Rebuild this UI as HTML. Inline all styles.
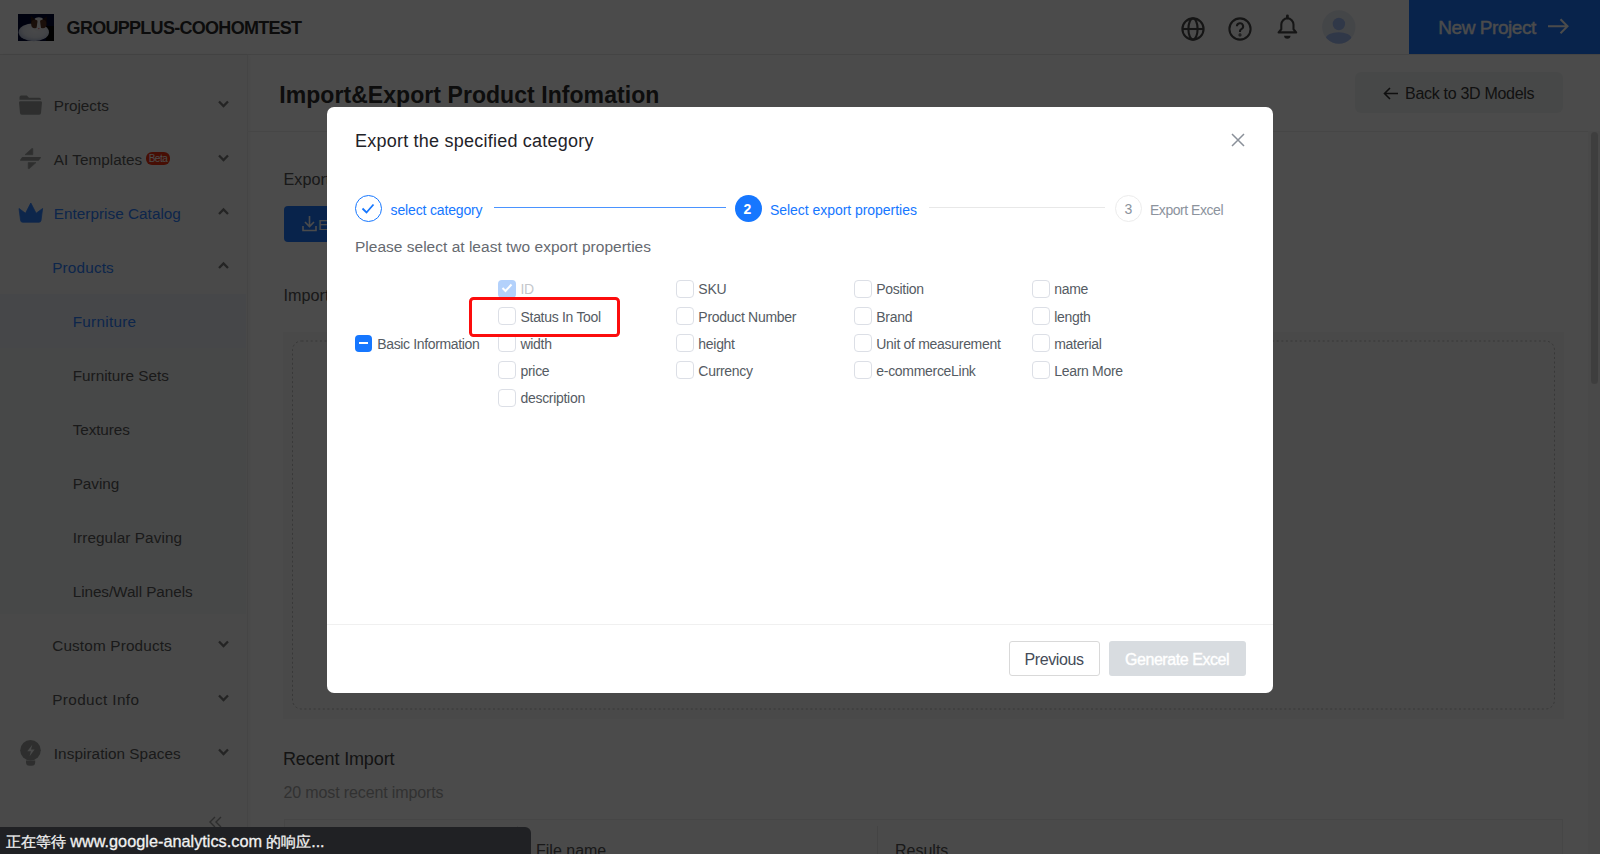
<!DOCTYPE html>
<html><head><meta charset="utf-8">
<style>
*{margin:0;padding:0;box-sizing:border-box}
html,body{width:1600px;height:854px;overflow:hidden;background:#fff;font-family:"Liberation Sans",sans-serif;color:#333}
.a{position:absolute;white-space:nowrap}
svg.a{overflow:visible}
.cb{position:absolute;width:18px;height:18px;border:1px solid #dcdfe6;border-radius:4px;background:#fff}
</style></head><body>
<div class="a" style="left:0;top:0;width:1600px;height:55px;background:#fff;border-bottom:1px solid #e6e6e6"></div>
<svg class="a" style="left:18px;top:14px" width="36" height="27" viewBox="0 0 36 27">
<defs><radialGradient id="cg" cx="0.55" cy="0.4" r="0.6"><stop offset="0" stop-color="#f6f7fa"/><stop offset="0.65" stop-color="#e4e8f1"/><stop offset="1" stop-color="#b5bfd8"/></radialGradient></defs>
<rect width="36" height="27" fill="#020735"/>
<rect x="28" y="12" width="8" height="15" fill="#000"/>
<ellipse cx="15.8" cy="18.2" rx="15.2" ry="9" fill="url(#cg)"/>
<circle cx="20.8" cy="10.5" r="7.2" fill="#eceef2"/>
<path d="M12.8 1.8L13 10.5L18 6.2z M28.8 2.2L28.6 11L23.6 6.2z" fill="#2a1510"/>
<ellipse cx="16.8" cy="10" rx="3.6" ry="4.3" fill="#5a3322"/>
<ellipse cx="24.8" cy="10" rx="3.6" ry="4.3" fill="#5a3322"/>
<path d="M19.6 6.8h2.4l1.2 8.5h-4.8z" fill="#f0f1f4"/>
<ellipse cx="20.8" cy="14.6" rx="0.9" ry="0.6" fill="#e46b78"/>
</svg>
<div class="a" style="left:66.60px;top:18.76px;font-size:18px;line-height:18px;color:#2a2a2a;font-weight:bold;letter-spacing:-0.711px;">GROUPPLUS-COOHOMTEST</div>
<svg class="a" style="left:1181px;top:17px" width="24" height="24" viewBox="0 0 24 24" fill="none" stroke="#4a4a4a" stroke-width="2.1"><circle cx="12" cy="12" r="10.6"/><ellipse cx="12" cy="12" rx="4.6" ry="10.6"/><line x1="1.4" y1="12" x2="22.6" y2="12"/></svg>
<svg class="a" style="left:1228px;top:17px" width="24" height="24" viewBox="0 0 24 24" fill="none" stroke="#4a4a4a" stroke-width="2.1"><circle cx="12" cy="12" r="10.6"/><path d="M8.9 9.3a3.1 3.1 0 1 1 4.5 2.8c-.9.5-1.4 1-1.4 2v1"/><circle cx="12" cy="17.9" r="0.5" fill="#4a4a4a"/></svg>
<svg class="a" style="left:1277px;top:14px" width="21" height="26" viewBox="0 0 21 26" fill="none" stroke="#4a4a4a" stroke-width="2.1"><path d="M10.4 1.8v2.2" stroke-linecap="round" stroke-width="2.8"/><path d="M1.6 18.4L4.3 15.2V10.6A6.1 6.3 0 0 1 16.5 10.6V15.2L19.2 18.4Z" stroke-linejoin="round"/><path d="M7.1 21.7h6.4a3.2 3 0 0 1 -6.4 0z" fill="#4a4a4a" stroke="none"/></svg>
<svg class="a" style="left:1322px;top:10px" width="34" height="34" viewBox="0 0 34 34"><defs><clipPath id="av"><circle cx="16.8" cy="17" r="16.7"/></clipPath></defs><circle cx="16.8" cy="17" r="16.7" fill="#e8edf5"/><g clip-path="url(#av)" fill="#a4bdf4"><circle cx="16.9" cy="14" r="6.2"/><ellipse cx="16.6" cy="28.5" rx="12.8" ry="6.2"/></g></svg>
<div class="a" style="left:1409px;top:0;width:191px;height:54px;background:#1c78fd"></div>
<div class="a" style="left:1438.30px;top:18.31px;font-size:19px;line-height:19px;color:#fff;font-weight:normal;letter-spacing:-0.442px;-webkit-text-stroke:0.4px #fff;">New Project</div>
<svg class="a" style="left:1547px;top:17px" width="22" height="18" viewBox="0 0 22 18" fill="none" stroke="#fff" stroke-width="2"><path d="M1 9.3h19.5M13.5 2.3l7 7-7 7"/></svg>
<div class="a" style="left:0;top:55px;width:248px;height:799px;background:#f6f8f7;border-right:1px solid #e9ebea;box-shadow:1px 0 4px rgba(0,0,0,0.06)"></div>
<div class="a" style="left:0;top:294px;width:246px;height:320px;background:#f1f3f3"></div>
<div class="a" style="left:0;top:294px;width:246px;height:54px;background:#edf2f9"></div>
<div class="a" style="left:53.80px;top:97.75px;font-size:15.3px;line-height:15.3px;color:#5a5a5a;font-weight:normal;letter-spacing:-0.039px;">Projects</div>
<svg class="a" style="left:218px;top:100.2px" width="11" height="8" viewBox="0 0 11 8" fill="none" stroke="#7a7a7a" stroke-width="2.3"><path d="M1 1.5l4.5 4.5 4.5-4.5"/></svg>
<div class="a" style="left:53.80px;top:151.75px;font-size:15.3px;line-height:15.3px;color:#5a5a5a;font-weight:normal;letter-spacing:0.021px;">AI Templates</div>
<svg class="a" style="left:218px;top:154.2px" width="11" height="8" viewBox="0 0 11 8" fill="none" stroke="#7a7a7a" stroke-width="2.3"><path d="M1 1.5l4.5 4.5 4.5-4.5"/></svg>
<div class="a" style="left:53.80px;top:205.75px;font-size:15.3px;line-height:15.3px;color:#2f80ff;font-weight:normal;letter-spacing:0.022px;">Enterprise Catalog</div>
<svg class="a" style="left:218px;top:208.2px" width="11" height="8" viewBox="0 0 11 8" fill="none" stroke="#7a7a7a" stroke-width="2.3"><path d="M1 6l4.5-4.5 4.5 4.5"/></svg>
<div class="a" style="left:52.20px;top:259.75px;font-size:15.3px;line-height:15.3px;color:#2f80ff;font-weight:normal;letter-spacing:0.174px;">Products</div>
<svg class="a" style="left:218px;top:262.2px" width="11" height="8" viewBox="0 0 11 8" fill="none" stroke="#7a7a7a" stroke-width="2.3"><path d="M1 6l4.5-4.5 4.5 4.5"/></svg>
<div class="a" style="left:72.70px;top:313.75px;font-size:15.3px;line-height:15.3px;color:#2f80ff;font-weight:normal;letter-spacing:0.272px;">Furniture</div>
<div class="a" style="left:72.70px;top:367.75px;font-size:15.3px;line-height:15.3px;color:#5a5a5a;font-weight:normal;letter-spacing:0.008px;">Furniture Sets</div>
<div class="a" style="left:72.70px;top:421.75px;font-size:15.3px;line-height:15.3px;color:#5a5a5a;font-weight:normal;letter-spacing:-0.103px;">Textures</div>
<div class="a" style="left:72.70px;top:475.75px;font-size:15.3px;line-height:15.3px;color:#5a5a5a;font-weight:normal;letter-spacing:-0.037px;">Paving</div>
<div class="a" style="left:72.70px;top:529.75px;font-size:15.3px;line-height:15.3px;color:#5a5a5a;font-weight:normal;letter-spacing:0.093px;">Irregular Paving</div>
<div class="a" style="left:72.70px;top:583.75px;font-size:15.3px;line-height:15.3px;color:#5a5a5a;font-weight:normal;letter-spacing:-0.065px;">Lines/Wall Panels</div>
<div class="a" style="left:52.20px;top:637.75px;font-size:15.3px;line-height:15.3px;color:#5a5a5a;font-weight:normal;letter-spacing:0.161px;">Custom Products</div>
<svg class="a" style="left:218px;top:640.2px" width="11" height="8" viewBox="0 0 11 8" fill="none" stroke="#7a7a7a" stroke-width="2.3"><path d="M1 1.5l4.5 4.5 4.5-4.5"/></svg>
<div class="a" style="left:52.20px;top:691.75px;font-size:15.3px;line-height:15.3px;color:#5a5a5a;font-weight:normal;letter-spacing:0.391px;">Product Info</div>
<svg class="a" style="left:218px;top:694.2px" width="11" height="8" viewBox="0 0 11 8" fill="none" stroke="#7a7a7a" stroke-width="2.3"><path d="M1 1.5l4.5 4.5 4.5-4.5"/></svg>
<div class="a" style="left:53.80px;top:745.75px;font-size:15.3px;line-height:15.3px;color:#5a5a5a;font-weight:normal;letter-spacing:0.060px;">Inspiration Spaces</div>
<svg class="a" style="left:218px;top:748.2px" width="11" height="8" viewBox="0 0 11 8" fill="none" stroke="#7a7a7a" stroke-width="2.3"><path d="M1 1.5l4.5 4.5 4.5-4.5"/></svg>
<div class="a" style="left:146px;top:152px;width:24px;height:12.5px;border-radius:6px;background:#f0320f;color:#fff;font-size:10px;line-height:13px;text-align:center;letter-spacing:-0.5px">Beta</div>
<svg class="a" style="left:19px;top:95px" width="23" height="20" viewBox="0 0 23 20"><path d="M0.5 2.2A1.7 1.7 0 0 1 2.2 .5h5.6l2.2 2.2h10.3a1.7 1.7 0 0 1 1.7 1.7v.4H.5z" fill="#9c9e9d"/><path d="M0 7.6A1.4 1.4 0 0 1 1.4 6.3H21.6A1.4 1.4 0 0 1 23 7.6l-1 10.5A1.8 1.8 0 0 1 20.2 19.8H2.8A1.8 1.8 0 0 1 1 18.1z" fill="#9c9e9d"/></svg>
<svg class="a" style="left:19px;top:148px" width="23" height="22" viewBox="0 0 23 22"><path d="M12.9 .4L13.8 .6V6.7H6z" fill="#9c9e9d" stroke="#9c9e9d" stroke-width=".6" stroke-linejoin="round"/><path d="M3.4 8.9H21.4Q22.4 8.9 21.8 9.9L20 12.2Q19.6 12.7 19 12.7H1.6Q.6 12.7 1.2 11.7L2.8 9.4Q3 8.9 3.4 8.9z" fill="#9c9e9d"/><path d="M9.2 14.6H17L10.1 20.8L9.2 20.5z" fill="#9c9e9d" stroke="#9c9e9d" stroke-width=".6" stroke-linejoin="round"/></svg>
<svg class="a" style="left:18.6px;top:202.8px" width="24" height="20" viewBox="0 0 24 20"><path d="M0 5.5L6.5 10.3L11.8 0L17.1 10.3L23.6 5.5L22 17.5Q21.8 19.2 20 19.2H3.6Q1.8 19.2 1.6 17.5z" fill="#2f80ff" stroke="#2f80ff" stroke-width=".8" stroke-linejoin="round"/></svg>
<svg class="a" style="left:20px;top:739.5px" width="22" height="27" viewBox="0 0 22 27"><circle cx="10.5" cy="10.3" r="10.3" fill="#9c9e9d"/><path d="M6 20.5h9.2v1.8a3.5 3.5 0 0 1 -3.5 3.5h-2.2a3.5 3.5 0 0 1 -3.5 -3.5z" fill="#9c9e9d"/><path d="M12.3 4.7L7.3 11.3h3.6L9.6 16.2L14.6 9.6H11z" fill="#f6f8f7"/></svg>
<svg class="a" style="left:207px;top:816px" width="16" height="12" viewBox="0 0 16 12" fill="none" stroke="#999" stroke-width="1.4"><path d="M8 1L3 6l5 5M14 1L9 6l5 5"/></svg>
<div class="a" style="left:279.30px;top:83.73px;font-size:23px;line-height:23px;color:#2e2e2e;font-weight:bold;letter-spacing:0.058px;">Import&amp;Export Product Infomation</div>
<div class="a" style="left:1355px;top:72px;width:208px;height:41px;border-radius:6px;background:#f2f4f3"></div>
<svg class="a" style="left:1383px;top:87px" width="16" height="13" viewBox="0 0 16 13" fill="none" stroke="#333" stroke-width="1.6"><path d="M15 6.5H1.5M7 1L1.5 6.5 7 12"/></svg>
<div class="a" style="left:1405.00px;top:85.75px;font-size:16px;line-height:16px;color:#3a3a3a;font-weight:normal;letter-spacing:-0.293px;">Back to 3D Models</div>
<div class="a" style="left:247px;top:131px;width:1341px;height:1px;background:#ececec"></div>
<div class="a" style="left:283.50px;top:171.48px;font-size:16.2px;line-height:16.2px;color:#555;font-weight:normal;">Export</div>
<div class="a" style="left:284px;top:206px;width:120px;height:36px;border-radius:4px;background:#1c78fd"></div>
<svg class="a" style="left:302px;top:215px" width="15" height="17" viewBox="0 0 15 17" fill="none" stroke="#fff" stroke-width="1.6"><path d="M7.5 1v10M3 7l4.5 4.5L12 7M1 11v4.5h13V11"/></svg>
<div class="a" style="left:318.00px;top:217.30px;font-size:15px;line-height:15px;color:#fff;font-weight:normal;">Export</div>
<div class="a" style="left:283.50px;top:287.48px;font-size:16.2px;line-height:16.2px;color:#555;font-weight:normal;">Import</div>
<div class="a" style="left:283px;top:332px;width:1281px;height:387px;background:#f6f6f6"></div>
<svg class="a" style="left:0;top:0" width="1600" height="854"><rect x="292.5" y="341" width="1262" height="368" rx="9" fill="none" stroke="#bdbdbd" stroke-width="1" stroke-dasharray="2 2.6"/></svg>
<div class="a" style="left:283.00px;top:750.16px;font-size:18px;line-height:18px;color:#444;font-weight:normal;letter-spacing:-0.129px;">Recent Import</div>
<div class="a" style="left:283.50px;top:784.65px;font-size:16px;line-height:16px;color:#a8a8a8;font-weight:normal;letter-spacing:-0.130px;">20 most recent imports</div>
<div class="a" style="left:284px;top:819px;width:1279px;height:40px;background:#fafafa;border:1px solid #eeeeee"></div>
<div class="a" style="left:517px;top:826px;width:1px;height:30px;background:#e6e6e6"></div>
<div class="a" style="left:877px;top:826px;width:1px;height:30px;background:#e6e6e6"></div>
<div class="a" style="left:536.00px;top:843.45px;font-size:16px;line-height:16px;color:#555;font-weight:normal;">File name</div>
<div class="a" style="left:895.00px;top:843.45px;font-size:16px;line-height:16px;color:#555;font-weight:normal;">Results</div>
<div class="a" style="left:1588px;top:131px;width:12px;height:723px;background:#f6f6f6"></div>
<div class="a" style="left:1591px;top:132px;width:7px;height:252px;border-radius:4px;background:#d4d4d4"></div>
<div class="a" style="left:0;top:0;width:1600px;height:854px;background:rgba(0,0,0,0.705)"></div>
<div class="a" style="left:327px;top:107px;width:946px;height:586px;background:#fff;border-radius:7px"></div>
<div class="a" style="left:355.00px;top:132.16px;font-size:18px;line-height:18px;color:#1f2329;font-weight:normal;letter-spacing:0.227px;">Export the specified category</div>
<svg class="a" style="left:1231px;top:133px" width="14" height="14" viewBox="0 0 14 14" fill="none" stroke="#8a9099" stroke-width="1.5"><path d="M1 1l12 12M13 1L1 13"/></svg>
<div class="a" style="left:354.5px;top:195px;width:27px;height:27px;border-radius:50%;border:1px solid #1677ff"></div>
<svg class="a" style="left:361px;top:203px" width="14" height="11" viewBox="0 0 14 11" fill="none" stroke="#1677ff" stroke-width="1.8"><path d="M1.5 5.5l4 4 7-8"/></svg>
<div class="a" style="left:390.60px;top:202.65px;font-size:14px;line-height:14px;color:#1677ff;font-weight:normal;letter-spacing:-0.154px;">select category</div>
<div class="a" style="left:494px;top:207.3px;width:232px;height:1px;background:#4a93ff"></div>
<div class="a" style="left:734.5px;top:195px;width:27px;height:27px;border-radius:50%;background:#1677ff"></div>
<div class="a" style="left:743.50px;top:202.15px;font-size:14px;line-height:14px;color:#fff;font-weight:bold;">2</div>
<div class="a" style="left:769.90px;top:202.65px;font-size:14px;line-height:14px;color:#1677ff;font-weight:normal;letter-spacing:-0.037px;">Select export properties</div>
<div class="a" style="left:929px;top:207.3px;width:176px;height:1px;background:#e8e8e8"></div>
<div class="a" style="left:1115px;top:195px;width:27px;height:27px;border-radius:50%;border:1px solid #ececec"></div>
<div class="a" style="left:1124.50px;top:202.15px;font-size:14px;line-height:14px;color:#8c939d;font-weight:normal;">3</div>
<div class="a" style="left:1150.00px;top:202.65px;font-size:14px;line-height:14px;color:#8c939d;font-weight:normal;letter-spacing:-0.463px;">Export Excel</div>
<div class="a" style="left:355.00px;top:238.88px;font-size:15.5px;line-height:15.5px;color:#666a70;font-weight:normal;letter-spacing:0.011px;">Please select at least two export properties</div>
<div class="a" style="left:498.40px;top:279.50px;width:18px;height:18px;border-radius:4px;background:#b3d1fb"></div>
<svg class="a" style="left:501.40px;top:282.50px" width="12" height="10" viewBox="0 0 12 10" fill="none" stroke="#fff" stroke-width="2"><path d="M1.5 5l3 3 6-6.5"/></svg>
<div class="a" style="left:520.50px;top:282.45px;font-size:14px;line-height:14px;color:#c4c7cc;font-weight:normal;letter-spacing:-0.300px;">ID</div>
<div class="cb" style="left:676.25px;top:279.50px"></div>
<div class="a" style="left:698.35px;top:282.25px;font-size:14px;line-height:14px;color:#555b63;font-weight:normal;letter-spacing:-0.300px;">SKU</div>
<div class="cb" style="left:854.20px;top:279.50px"></div>
<div class="a" style="left:876.30px;top:282.25px;font-size:14px;line-height:14px;color:#555b63;font-weight:normal;letter-spacing:-0.300px;">Position</div>
<div class="cb" style="left:1032.10px;top:279.50px"></div>
<div class="a" style="left:1054.20px;top:282.25px;font-size:14px;line-height:14px;color:#555b63;font-weight:normal;letter-spacing:-0.300px;">name</div>
<div class="cb" style="left:498.40px;top:306.75px"></div>
<div class="a" style="left:520.50px;top:309.50px;font-size:14px;line-height:14px;color:#555b63;font-weight:normal;letter-spacing:-0.300px;">Status In Tool</div>
<div class="cb" style="left:676.25px;top:306.75px"></div>
<div class="a" style="left:698.35px;top:309.50px;font-size:14px;line-height:14px;color:#555b63;font-weight:normal;letter-spacing:-0.300px;">Product Number</div>
<div class="cb" style="left:854.20px;top:306.75px"></div>
<div class="a" style="left:876.30px;top:309.50px;font-size:14px;line-height:14px;color:#555b63;font-weight:normal;letter-spacing:-0.300px;">Brand</div>
<div class="cb" style="left:1032.10px;top:306.75px"></div>
<div class="a" style="left:1054.20px;top:309.50px;font-size:14px;line-height:14px;color:#555b63;font-weight:normal;letter-spacing:-0.300px;">length</div>
<div class="cb" style="left:498.40px;top:334.00px"></div>
<div class="a" style="left:520.50px;top:336.75px;font-size:14px;line-height:14px;color:#555b63;font-weight:normal;letter-spacing:-0.300px;">width</div>
<div class="cb" style="left:676.25px;top:334.00px"></div>
<div class="a" style="left:698.35px;top:336.75px;font-size:14px;line-height:14px;color:#555b63;font-weight:normal;letter-spacing:-0.300px;">height</div>
<div class="cb" style="left:854.20px;top:334.00px"></div>
<div class="a" style="left:876.30px;top:336.75px;font-size:14px;line-height:14px;color:#555b63;font-weight:normal;letter-spacing:-0.300px;">Unit of measurement</div>
<div class="cb" style="left:1032.10px;top:334.00px"></div>
<div class="a" style="left:1054.20px;top:336.75px;font-size:14px;line-height:14px;color:#555b63;font-weight:normal;letter-spacing:-0.300px;">material</div>
<div class="cb" style="left:498.40px;top:361.25px"></div>
<div class="a" style="left:520.50px;top:364.00px;font-size:14px;line-height:14px;color:#555b63;font-weight:normal;letter-spacing:-0.300px;">price</div>
<div class="cb" style="left:676.25px;top:361.25px"></div>
<div class="a" style="left:698.35px;top:364.00px;font-size:14px;line-height:14px;color:#555b63;font-weight:normal;letter-spacing:-0.300px;">Currency</div>
<div class="cb" style="left:854.20px;top:361.25px"></div>
<div class="a" style="left:876.30px;top:364.00px;font-size:14px;line-height:14px;color:#555b63;font-weight:normal;letter-spacing:-0.300px;">e-commerceLink</div>
<div class="cb" style="left:1032.10px;top:361.25px"></div>
<div class="a" style="left:1054.20px;top:364.00px;font-size:14px;line-height:14px;color:#555b63;font-weight:normal;letter-spacing:-0.300px;">Learn More</div>
<div class="cb" style="left:498.40px;top:388.50px"></div>
<div class="a" style="left:520.50px;top:391.25px;font-size:14px;line-height:14px;color:#555b63;font-weight:normal;letter-spacing:-0.300px;">description</div>
<div class="a" style="left:354.75px;top:334.5px;width:17.5px;height:17.5px;border-radius:4px;background:#1677ff"></div>
<div class="a" style="left:359px;top:342px;width:9px;height:2.2px;background:#fff"></div>
<div class="a" style="left:377.30px;top:337.15px;font-size:14px;line-height:14px;color:#555b63;font-weight:normal;letter-spacing:-0.354px;">Basic Information</div>
<div class="a" style="left:469px;top:297.2px;width:151px;height:39.6px;border:3.7px solid #fc0d0d;border-radius:4.5px"></div>
<div class="a" style="left:327px;top:624px;width:946px;height:1px;background:#f0f0f0"></div>
<div class="a" style="left:1008.75px;top:641.25px;width:90.75px;height:35px;border:1px solid #d9d9d9;border-radius:3px;background:#fff"></div>
<div class="a" style="left:1024.50px;top:652.45px;font-size:16px;line-height:16px;color:#454c58;font-weight:normal;letter-spacing:-0.393px;">Previous</div>
<div class="a" style="left:1109px;top:641.25px;width:136.5px;height:35px;border-radius:3px;background:#d8dce0"></div>
<div class="a" style="left:1125.00px;top:652.45px;font-size:16px;line-height:16px;color:#fff;font-weight:normal;letter-spacing:-0.445px;-webkit-text-stroke:0.4px #fff;">Generate Excel</div>
<div class="a" style="left:0;top:827px;width:531px;height:27px;background:#202124;border-top-right-radius:6px"></div>
<div class="a" style="left:6px;top:832px;font-size:15px;line-height:19px;color:#f1f1f1;-webkit-text-stroke:0.3px #f1f1f1">正在等待 <span style="font-size:16.3px">www.google-analytics.com</span> 的响应<span style="font-size:16px">...</span></div>
</body></html>
